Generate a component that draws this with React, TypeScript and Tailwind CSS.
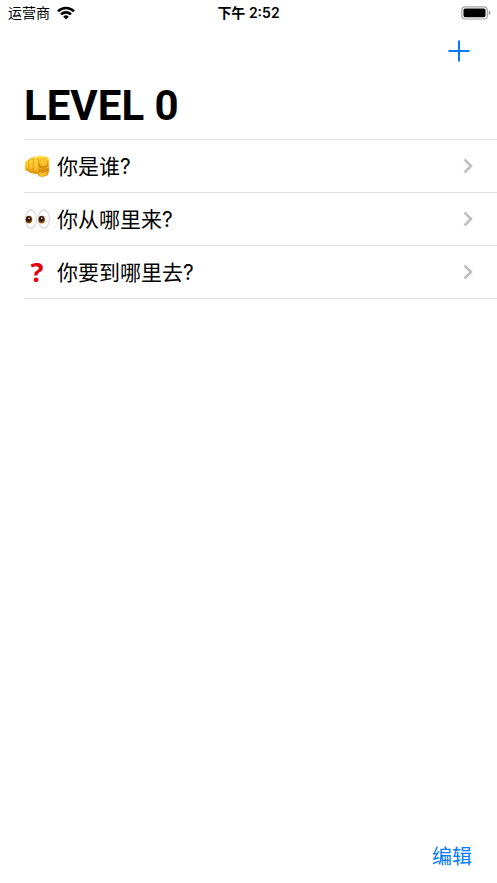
import type { ReactNode } from 'react';

interface Question {
  id: string;
  icon: ReactNode;
  title: string;
}

function PointingHand() {
  return (
    <svg viewBox="0 0 26 26" className="w-[26px] h-[26px]" aria-hidden="true">
      <defs>
        <linearGradient id="skin" x1="0" y1="0" x2="0" y2="1">
          <stop offset="0" stopColor="#ffd63c" />
          <stop offset="0.65" stopColor="#fcc026" />
          <stop offset="1" stopColor="#e0940e" />
        </linearGradient>
        <radialGradient id="tip" cx="0.5" cy="0.4" r="0.6">
          <stop offset="0" stopColor="#ffd540" />
          <stop offset="0.7" stopColor="#f5b41f" />
          <stop offset="1" stopColor="#cf860a" />
        </radialGradient>
      </defs>
      <path
        d="M5.500 6.500C7.500 4.300 10 3.500 13 3.500h8c3 0 4.500 1.800 4.400 5l-.4 6.500c0 3-.3 5.500-2 7.300-1.500 1.400-5 1.600-7.800.9L13.500 20.500C10 21.300 7.500 20.500 5 19c-3-1.300-4-3.500-4-6.200S2.500 7.500 5.500 6.500z"
        fill="url(#skin)"
      />
      <path d="M13.500 15c3.500 2 7 1.800 11.500-1 .2 4-.4 6.700-2 8.200-2 1.400-5.500 1.400-8 .8-1.500-1.500-2.300-5-1.500-8z" fill="#d98f0f" />
      <path d="M14.500 19c2.800 1.200 6 .9 8.800-.8l-.9 3.500c-1.600 1.400-4.900 1.600-7 1z" fill="#f8c02a" />
      <rect x="1" y="7.500" width="5.500" height="10.500" rx="2.700" fill="url(#skin)" />
      <rect x="4.700" y="5.500" width="5.600" height="14" rx="2.800" fill="url(#skin)" stroke="#d48c10" strokeWidth="0.700" />
      <rect x="9.300" y="6" width="5.700" height="14.500" rx="2.800" fill="url(#skin)" stroke="#d48c10" strokeWidth="0.700" />
      <path d="M11 6c2-1.500 6-2 9.500-1.500" fill="none" stroke="#ffd63c" strokeWidth="2" strokeLinecap="round" />
      <ellipse cx="19.300" cy="11" rx="5.200" ry="5" fill="#b97408" opacity="0.600" />
      <circle cx="19.300" cy="9.800" r="4.500" fill="url(#tip)" />
    </svg>
  );
}

function Eyes() {
  return (
    <svg viewBox="0 0 26 26" className="w-[26px] h-[26px]" aria-hidden="true">
      <defs>
        <radialGradient id="eyeball" cx="0.5" cy="0.5" r="0.5">
          <stop offset="0.7" stopColor="#ffffff" />
          <stop offset="0.9" stopColor="#e6e6e8" />
          <stop offset="1" stopColor="#b8b8bc" />
        </radialGradient>
        <radialGradient id="iris" cx="0.45" cy="0.4" r="0.6">
          <stop offset="0.35" stopColor="#261006" />
          <stop offset="0.7" stopColor="#6d3508" />
          <stop offset="1" stopColor="#bd7420" />
        </radialGradient>
      </defs>
      <ellipse cx="7" cy="13" rx="5.800" ry="9.800" fill="url(#eyeball)" />
      <ellipse cx="19.800" cy="13" rx="5.800" ry="9.800" fill="url(#eyeball)" />
      <ellipse cx="4.900" cy="13.600" rx="3.400" ry="3.900" fill="url(#iris)" />
      <ellipse cx="17.700" cy="13.600" rx="3.400" ry="3.900" fill="url(#iris)" />
      <circle cx="5" cy="12.300" r="0.800" fill="#fff" />
      <circle cx="17.800" cy="12.300" r="0.800" fill="#fff" />
    </svg>
  );
}

const questions: Question[] = [
  { id: 'who', icon: <PointingHand />, title: '你是谁?' },
  { id: 'from', icon: <Eyes />, title: '你从哪里来?' },
  {
    id: 'to',
    icon: <span className="font-['Noto_Sans',sans-serif] font-bold text-[27px] leading-7 text-[#e3000b]">?</span>,
    title: '你要到哪里去?',
  },
];

function StatusBar() {
  return (
    <div className="grid grid-cols-3 items-center h-[26px] px-1 text-[14px] leading-6">
      <div className="flex items-center gap-[7px] pl-1">
        <span>运营商</span>
        <svg viewBox="0 0 18 14" className="w-[18px] h-[14px]" aria-label="Wi-Fi">
          <g fill="none" stroke="#000" strokeWidth="2.600">
            <path d="M1 5.200a11.500 11.500 0 0 1 16 0" />
            <path d="M4 8.400a7.200 7.200 0 0 1 10 0" />
          </g>
          <path d="M9 13.500 6.200 10.700a4 4 0 0 1 5.600 0z" />
        </svg>
      </div>
      <div className="text-center font-semibold whitespace-nowrap">下午 2:52</div>
      <svg viewBox="0 0 32 14" className="w-8 h-3.5 justify-self-end" aria-label="电池">
        <rect x="0.800" y="0.800" width="25.500" height="12.200" rx="3.500" fill="none" stroke="#a3a3a3" strokeWidth="1.200" />
        <rect x="2.500" y="2.500" width="22" height="8.800" rx="1.700" />
        <path d="M27.800 4.700c2 .6 2 3.800 0 4.400z" fill="#8e8e8e" />
      </svg>
    </div>
  );
}

function QuestionRow({ icon, title }: Omit<Question, 'id'>) {
  return (
    <li className="border-b border-[#e0e0e2]">
      <button type="button" className="flex items-center w-full h-[52px] pr-6 text-left cursor-pointer">
        <span className="flex items-center justify-center w-[26px] mr-[7px] shrink-0">{icon}</span>
        <span className="grow pt-0.5 text-[21px] leading-7">{title}</span>
        <svg viewBox="0 0 10 16" className="w-2.5 h-4 shrink-0" aria-hidden="true">
          <path d="m1.500 1.500 6.500 6.500-6.500 6.500" fill="none" stroke="#c0c0c3" strokeWidth="2.600" />
        </svg>
      </button>
    </li>
  );
}

export default function App() {
  return (
    <div className="flex flex-col min-h-screen bg-white text-black font-['Inter','Noto_Sans_CJK_SC',sans-serif]">
      <StatusBar />
      <header>
        <div className="flex items-center justify-end h-[49px] pr-[27px]">
          <button type="button" aria-label="添加" className="text-[#007aff] cursor-pointer">
            <svg viewBox="0 0 22 22" className="block w-[22px] h-[22px]">
              <path d="M11 .5v21M.5 11h21" fill="none" stroke="currentColor" strokeWidth="2" />
            </svg>
          </button>
        </div>
        <h1 className="h-16 pt-1.5 pl-6 font-['Roboto',sans-serif] text-[42px] leading-[50px] font-bold">LEVEL 0</h1>
      </header>
      <main className="grow pl-6">
        <ul className="border-t border-[#e0e0e2]">
          {questions.map((q) => (
            <QuestionRow key={q.id} icon={q.icon} title={q.title} />
          ))}
        </ul>
      </main>
      <footer className="flex items-center justify-end h-[52px] pr-[25px]">
        <button type="button" className="text-[20px] leading-7 text-[#007aff] cursor-pointer">
          编辑
        </button>
      </footer>
    </div>
  );
}
